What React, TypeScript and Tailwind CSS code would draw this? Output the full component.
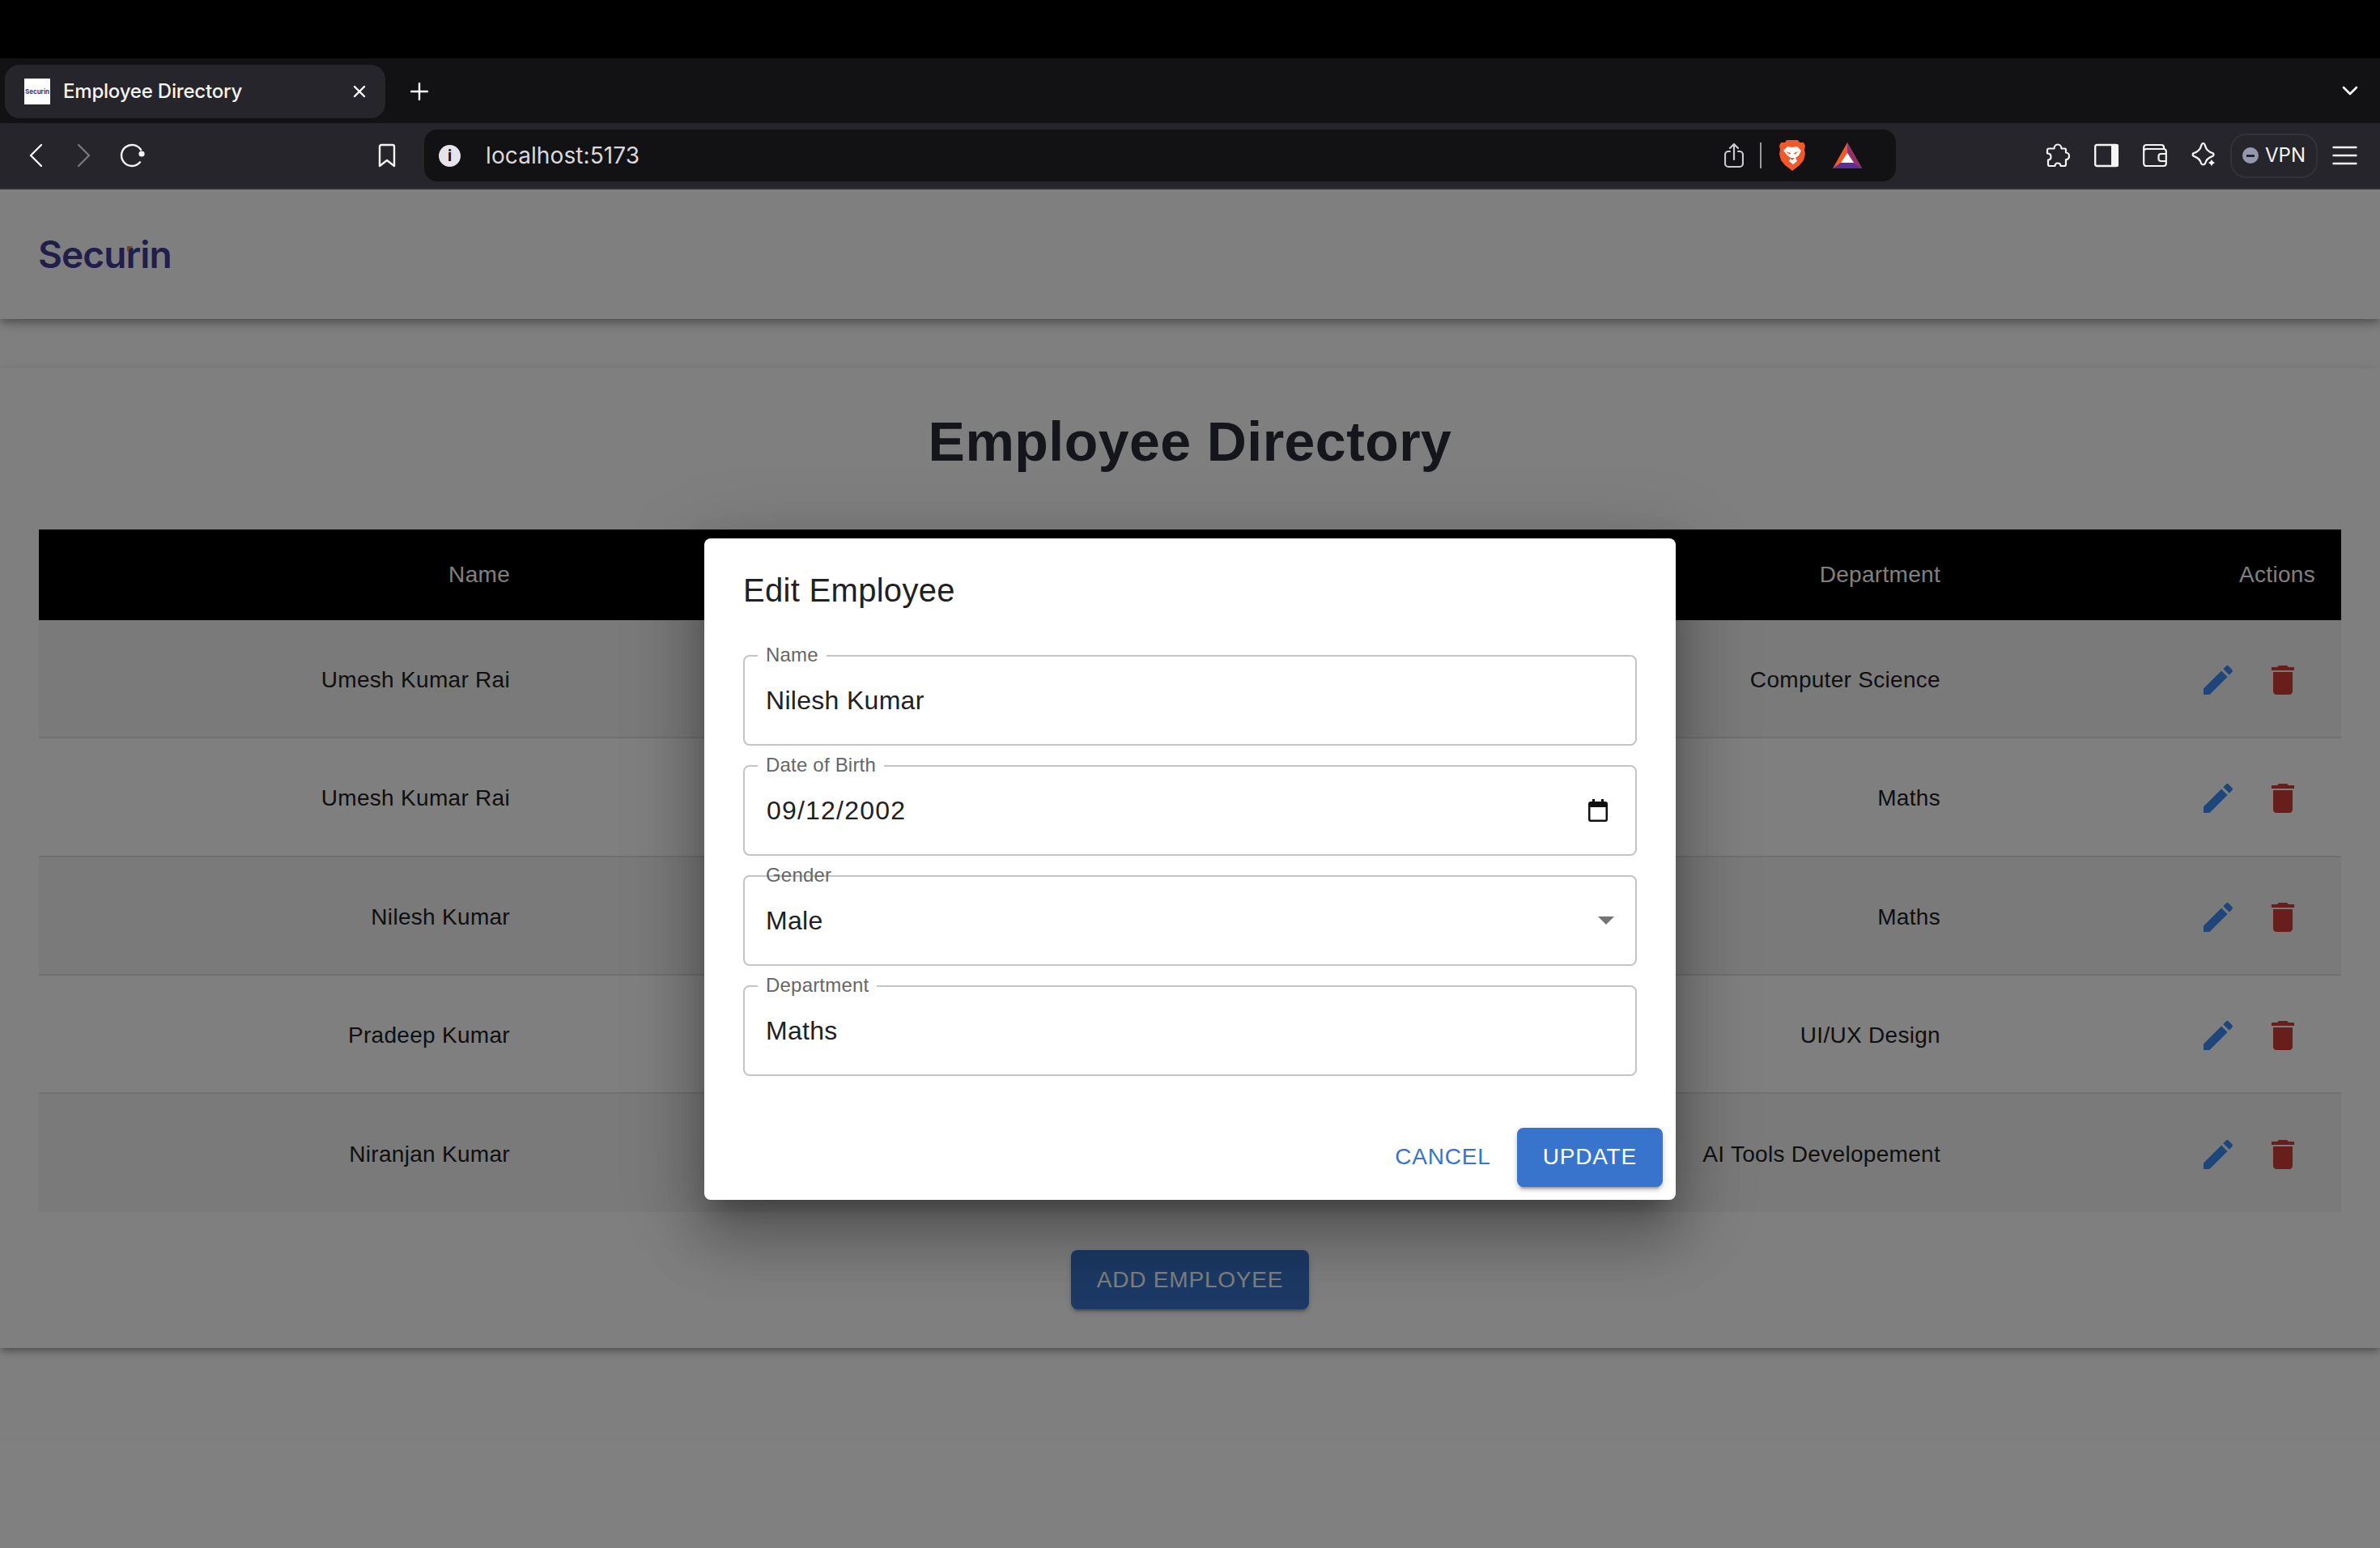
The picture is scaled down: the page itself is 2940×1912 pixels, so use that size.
import { ReactNode } from 'react'

interface Employee {
  name: string
  department: string
}

const employees: Employee[] = [
  { name: 'Umesh Kumar Rai', department: 'Computer Science' },
  { name: 'Umesh Kumar Rai', department: 'Maths' },
  { name: 'Nilesh Kumar', department: 'Maths' },
  { name: 'Pradeep Kumar', department: 'UI/UX Design' },
  { name: 'Niranjan Kumar', department: 'AI Tools Developement' },
]

function BrowserTabBar() {
  return (
    <div className="flex h-[80px] items-start bg-[#121214] pl-[6px] pt-[8px] pr-[27px]">
      <div className="flex h-[66px] w-[470px] items-center rounded-[18px] bg-[#25252b] pl-[24px] pr-[23px]">
        <div className="flex h-[32px] w-[32px] items-center justify-center overflow-hidden bg-white text-[8px] font-bold text-[#3b2f8f]">
          Securin
        </div>
        <span className="ml-[16px] text-[24px] font-medium tracking-[-0.2px] text-[#f4f4f5]">Employee Directory</span>
        <svg className="ml-auto" width="18" height="18" viewBox="0 0 18 18" fill="none" stroke="#fff" strokeWidth="2.4" strokeLinecap="round">
          <path d="M3 3l12 12M15 3L3 15" />
        </svg>
      </div>
      <svg className="ml-[31px] mt-[22px]" width="22" height="22" viewBox="0 0 22 22" fill="none" stroke="#fff" strokeWidth="2.4" strokeLinecap="round">
        <path d="M11 1v20M1 11h20" />
      </svg>
      <svg className="ml-auto mt-[26px]" width="20" height="12" viewBox="0 0 20 12" fill="none" stroke="#fff" strokeWidth="2.6" strokeLinecap="round" strokeLinejoin="round">
        <path d="M2 2l8 8 8-8" />
      </svg>
    </div>
  )
}

function BrowserToolbar() {
  return (
    <div className="flex h-[82px] items-center border-b-2 border-[#2e2e34] bg-[#25252b] pl-[36px] pr-[28px]">
      <svg width="16" height="30" viewBox="0 0 16 30" fill="none" stroke="#f4f4f5" strokeWidth="2.4" strokeLinecap="round" strokeLinejoin="round">
        <path d="M15 2L2 15l13 13" />
      </svg>
      <svg className="ml-[44px]" width="16" height="30" viewBox="0 0 16 30" fill="none" stroke="#77777d" strokeWidth="2.4" strokeLinecap="round" strokeLinejoin="round">
        <path d="M1 2l13 13L1 28" />
      </svg>
      <svg className="ml-[36px]" width="32" height="30" viewBox="0 0 32 30" fill="none" stroke="#f4f4f5" strokeWidth="2.4" strokeLinecap="round">
        <path d="M26 8A13 13 0 1 0 25 23.300" />
        <circle cx="27" cy="13" r="3.600" fill="#f4f4f5" stroke="none" />
      </svg>
      <svg className="ml-[286px]" width="24" height="30" viewBox="0 0 24 30" fill="none" stroke="#f4f4f5" strokeWidth="2.4" strokeLinejoin="round">
        <path d="M3 4a2 2 0 0 1 2-2h14a2 2 0 0 1 2 2v24l-9-7-9 7z" />
      </svg>
      <div className="ml-[34px] flex h-[64px] w-[1818px] items-center rounded-[16px] bg-[#121214] pl-[18px] pr-[42px]">
        <div className="flex h-[27px] w-[27px] items-center justify-center rounded-full bg-[#e4e4ea] text-[19px] leading-none font-bold text-[#121214]">
          i
        </div>
        <span className="ml-[31px] text-[28px] tracking-[0.1px] text-[#d9d9de]">localhost:5173</span>
        <svg className="ml-auto" width="24" height="32" viewBox="0 0 24 32" fill="none" stroke="#c9c9ce" strokeWidth="2.2" strokeLinecap="round" strokeLinejoin="round">
          <path d="M7 11H5a4 4 0 0 0-4 4v11a4 4 0 0 0 4 4h14a4 4 0 0 0 4-4V15a4 4 0 0 0-4-4h-2M12 21V2M7 7l5-5 5 5" />
        </svg>
        <div className="ml-[20px] h-[32px] w-[2px] bg-[#9a9aa0]" />
        <svg className="ml-[22px]" width="32" height="38" viewBox="0 0 32 38">
          <path d="M9 0h14l2 3 5 0 2 4-1 5 1 5-2 8-5 6-9 7-9-7-5-6-2-8 1-5-1-5 2-4 5 0z" fill="#f0592b" />
          <path d="M5 13l5-5 6 1 6-1 5 5-3 6-4 3 2 4-5 4-5-4 2-4-4-3z" fill="#fff" />
          <path d="M8 14l6 2-1 2zM24 14l-6 2 1 2zM13 22h6l-3 3z" fill="#f0592b" />
        </svg>
        <svg className="ml-[34px]" width="36" height="32" viewBox="0 0 36 32">
          <path d="M18 0L0 32h36z" fill="#f0592b" />
          <path d="M18 0l18 32-10-7-8-12z" fill="#92306f" />
          <path d="M0 32l10-7h16l10 7z" fill="#5f2a9b" />
          <path d="M18 13l8 12H10z" fill="#fff" />
        </svg>
      </div>
      <svg className="ml-[185px]" width="30" height="30" viewBox="0 0 30 30" fill="none" stroke="#f4f4f5" strokeWidth="2.200" strokeLinejoin="round">
        <path d="M10.500 6.500C10.500 3.500 12.500 1.500 15 1.500C17.500 1.500 19.500 3.500 19.500 6.500L24 6.500A1.500 1.500 0 0 1 25 8L25 11.500C27.500 11.500 29 13.500 29 15.500C29 18 27.500 20 25 20L25 26A2 2 0 0 1 23 28L18.500 28C18.500 26 17.500 24.500 15 24.500C12.500 24.500 11.500 26 11.500 28L5 28A2 2 0 0 1 3 26L3 20.500C5.500 20.500 6.500 19 6.500 16.500C6.500 14 5 12.500 2 12.500L2 8.500A2 2 0 0 1 4 6.500z" />
      </svg>
      <svg className="ml-[30px]" width="30" height="30" viewBox="0 0 30 30">
        <rect x="1.200" y="2" width="27.600" height="26" rx="2" fill="none" stroke="#f4f4f5" strokeWidth="2.400" />
        <rect x="21" y="1" width="9" height="28" rx="2" fill="#f4f4f5" />
      </svg>
      <svg className="ml-[30px]" width="30" height="30" viewBox="0 0 30 30" fill="none" stroke="#f4f4f5" strokeWidth="2.200" strokeLinejoin="round">
        <rect x="1.200" y="7" width="27.600" height="21" rx="3" />
        <path d="M1.200 9V5a3 3 0 0 1 3-3H23a3 3 0 0 1 3 3v2" />
        <path d="M29 13h-6.500a3 3 0 0 0-3 3v3a3 3 0 0 0 3 3H29" />
      </svg>
      <svg className="ml-[30px]" width="30" height="32" viewBox="0 0 30 32" fill="none" stroke="#f4f4f5" strokeLinejoin="round">
        <path transform="translate(-2.500 -1.500) scale(1.220)" strokeWidth="1.900" d="M14 2c1 0 1.500 1 2 2.500c1 4 3 6 7.500 7.500c1.500.5 1.500 2.500 0 3c-4.500 1.500-6.500 3.500-7.500 7.500c-.5 1.500-3.500 1.500-4 0c-1-4-3-6-7.500-7.500c-1.500-.5-1.500-2.500 0-3c4.500-1.500 6.500-3.500 7.500-7.500c.5-1.500 1-2.500 2-2.500z" />
        <path d="M25 20l1.800 3.200 3.200 1.800-3.200 1.800-1.800 3.200-1.800-3.200-3.200-1.800 3.200-1.800z" fill="#f4f4f5" stroke="#25252b" strokeWidth="1" />
      </svg>
      <div className="ml-[18px] flex h-[55px] w-[108px] items-center justify-center gap-[8px] rounded-[20px] border-2 border-[#323238]">
        <div className="flex h-[20px] w-[20px] items-center justify-center rounded-full bg-[#9698ae]">
          <div className="h-[3px] w-[10px] bg-[#25252b]" />
        </div>
        <span className="text-[24px] text-[#f4f4f5]">VPN</span>
      </div>
      <svg className="ml-auto" width="31" height="24" viewBox="0 0 31 24" fill="none" stroke="#f4f4f5" strokeWidth="2.400" strokeLinecap="round">
        <path d="M1.500 2h28M1.500 12h28M1.500 22h28" />
      </svg>
    </div>
  )
}

function EditIcon() {
  return (
    <svg width="48" height="48" viewBox="0 0 24 24" fill="#3f8df6">
      <path d="M3 17.25V21h3.75L17.81 9.94l-3.75-3.75L3 17.25zM20.71 7.04c.39-.39.39-1.02 0-1.41l-2.34-2.34a.9959.9959 0 0 0-1.41 0l-1.83 1.83 3.75 3.75 1.83-1.83z" />
    </svg>
  )
}

function DeleteIcon() {
  return (
    <svg width="48" height="48" viewBox="0 0 24 24" fill="#d03f38">
      <path d="M6 19c0 1.1.9 2 2 2h8c1.1 0 2-.9 2-2V7H6v12zM19 4h-3.5l-1-1h-5l-1 1H5v2h14V4z" />
    </svg>
  )
}

function DirectoryTable() {
  return (
    <div className="mx-[48px] text-[28px] tracking-[0.3px]">
      <div className="grid h-[112px] grid-cols-[582px_1fr_432px] items-center bg-black pr-[32px] text-white">
        <div className="text-right">Name</div>
        <div className="pr-[31px] text-right">Department</div>
        <div className="text-right">Actions</div>
      </div>
      {employees.map((employee, index) => (
        <div
          key={index}
          className={`grid h-[146.25px] grid-cols-[582px_1fr_432px] items-center border-b-2 border-[#e0e0e0] pr-[32px] pt-[4px] text-[#212121] last:border-b-0 ${index % 2 === 0 ? 'bg-[#f5f5f5]' : 'bg-white'}`}
        >
          <div className="text-right">{employee.name}</div>
          <div className="pr-[31px] text-right">{employee.department}</div>
          <div className="flex justify-end">
            <div className="flex h-[80px] w-[80px] items-center justify-center">
              <EditIcon />
            </div>
            <div className="flex h-[80px] w-[80px] items-center justify-center">
              <DeleteIcon />
            </div>
          </div>
        </div>
      ))}
    </div>
  )
}

function Field({ label, notched = true, children }: { label: string; notched?: boolean; children: ReactNode }) {
  return (
    <div className="relative flex h-[112px] items-center rounded-[8px] border-2 border-[#c4c4c4] pl-[26px] pr-[26px] text-[32px] tracking-[0.3px] text-[#212121]">
      <span className={`absolute left-[16px] top-[-18px] px-[10px] text-[24px] leading-[32px] tracking-[0.2px] text-[#666] ${notched ? 'bg-white' : ''}`}>
        {label}
      </span>
      {children}
    </div>
  )
}

function EditDialog() {
  return (
    <div className="flex h-[817px] w-[1200px] flex-col rounded-[8px] bg-white shadow-[0_22px_30px_-14px_rgba(0,0,0,0.28),0_48px_76px_6px_rgba(0,0,0,0.2),0_18px_92px_16px_rgba(0,0,0,0.17)]">
      <h2 className="px-[48px] pt-[32px] text-[40px] leading-[64px] tracking-[0.3px] text-[#212121]">Edit Employee</h2>
      <div className="mt-[48px] flex flex-col gap-[24px] px-[48px]">
        <Field label="Name">Nilesh Kumar</Field>
        <Field label="Date of Birth">
          <span className="ml-[1px] tracking-[1.2px]">09/12/2002</span>
          <svg className="ml-auto mr-[8px]" width="24" height="28" viewBox="0 0 24 28">
            <path d="M5 0h3v3h8V0h3v3h2a3 3 0 0 1 3 3v19a3 3 0 0 1-3 3H3a3 3 0 0 1-3-3V6a3 3 0 0 1 3-3h2zM2.500 10v15a.5.5 0 0 0 .5.5h18a.5.5 0 0 0 .5-.5V10z" fill="#111" fillRule="evenodd" />
          </svg>
        </Field>
        <Field label="Gender" notched={false}>
          <span>Male</span>
          <svg className="ml-auto" width="20" height="10" viewBox="0 0 20 10" fill="#757575">
            <path d="M0 0h20L10 10z" />
          </svg>
        </Field>
        <Field label="Department">Maths</Field>
      </div>
      <div className="mt-auto flex items-center justify-end gap-[16px] pb-[16px] pr-[16px] text-[28px] tracking-[0.8px]">
        <div className="flex h-[73px] items-center px-[16px] text-[#3874cb]">CANCEL</div>
        <div className="flex h-[73px] items-center rounded-[8px] bg-[#3874cb] px-[32px] text-white shadow-[0_6px_2px_-4px_rgba(0,0,0,0.2),0_4px_4px_0_rgba(0,0,0,0.14),0_2px_10px_0_rgba(0,0,0,0.12)]">
          UPDATE
        </div>
      </div>
    </div>
  )
}

export default function App() {
  return (
    <div className="flex h-[1912px] flex-col bg-white font-['Liberation_Sans',Arial,sans-serif]">
      <div className="h-[72px] bg-black" />
      <div className="font-['Inter',sans-serif]">
        <BrowserTabBar />
        <BrowserToolbar />
      </div>
      <div className="relative flex-1 overflow-hidden bg-white">
        <header className="flex h-[160px] items-center bg-white pl-[47px] shadow-[0_4px_8px_-2px_rgba(0,0,0,0.2),0_8px_10px_0_rgba(0,0,0,0.14),0_2px_20px_0_rgba(0,0,0,0.12)]">
          <span className="relative font-['Inter',sans-serif] text-[46px] font-semibold tracking-[-0.9px] text-[#443c98]">
            Securin
            <svg className="absolute left-[110px] top-[24px]" width="7" height="7" viewBox="0 0 7 7" fill="#e08a3c">
              <path d="M0 0h7L0 7z" />
            </svg>
          </span>
        </header>
        <main className="mt-[61px] flex flex-col bg-white pb-[48px] pt-[48px] shadow-[0_6px_6px_-4px_rgba(0,0,0,0.2),0_6px_8px_0_rgba(0,0,0,0.14),0_2px_16px_0_rgba(0,0,0,0.12)]">
          <h1 className="mb-[67px] text-center text-[68px] leading-[84px] font-bold tracking-[0.45px] text-[#2a2c38]">Employee Directory</h1>
          <DirectoryTable />
          <div className="mt-[47px] flex justify-center">
            <div className="flex h-[73px] w-[294px] items-center justify-center rounded-[8px] bg-[#3874cb] text-[28px] tracking-[0.8px] text-white shadow-[0_6px_2px_-4px_rgba(0,0,0,0.2),0_4px_4px_0_rgba(0,0,0,0.14),0_2px_10px_0_rgba(0,0,0,0.12)]">
              ADD EMPLOYEE
            </div>
          </div>
        </main>
        <div className="absolute inset-0 flex items-center justify-center bg-black/50">
          <EditDialog />
        </div>
      </div>
    </div>
  )
}
